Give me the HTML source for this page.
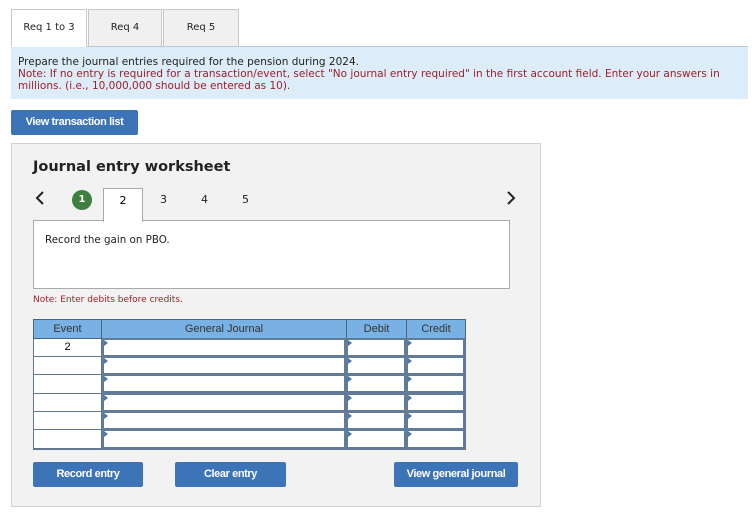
<!DOCTYPE html>
<html><head><meta charset="utf-8"><style>
*{box-sizing:border-box;margin:0;padding:0}
body{width:756px;height:515px;background:#fff;font-family:"DejaVu Sans","Liberation Sans",sans-serif;position:relative;overflow:hidden}
.a{position:absolute}
.tab{position:absolute;top:9px;height:38px;border:1px solid #c8c8c8;background:#f0f0f0;font-size:10px;text-align:center;line-height:36px;color:#222}
.btn{position:absolute;background:#3c74b7;color:#fff;font-family:"Liberation Sans",sans-serif;font-weight:bold;font-size:11px;text-align:center;border-radius:2px;letter-spacing:-0.4px}
.nav{position:absolute;top:193px;font-size:11px;color:#222}
.cell{position:absolute;background:#fff}
.in{position:absolute;background:#fff;border:2px solid #627c97}
.in:before{content:"";position:absolute;left:0;top:0;border-left:4px solid #4a77b0;border-top:3px solid transparent;border-bottom:3px solid transparent}
.th{position:absolute;top:319px;height:20px;background:#79b1e5;border:1px solid #4a6580;font-family:"Liberation Sans",sans-serif;font-size:11px;text-align:center;line-height:18px;color:#333}
</style></head><body>
<div class="tab" style="left:11px;width:76px;background:#fff;border-bottom-color:#fff;z-index:2">Req 1 to 3</div>
<div class="tab" style="left:88px;width:74px">Req 4</div>
<div class="tab" style="left:163px;width:76px">Req 5</div>
<div class="a" style="left:11px;top:46px;width:737px;height:53px;background:#dcecf9;border-top:1px solid #b8c8d8;font-size:10.5px;line-height:12px;padding:9px 0 0 7px;color:#222">
Prepare the journal entries required for the pension during 2024.<br>
<span style="color:#a0202a">Note: If no entry is required for a transaction/event, select "No journal entry required" in the first account field. Enter your answers in millions. (i.e., 10,000,000 should be entered as 10).</span></div>
<div class="btn" style="left:11px;top:110px;width:127px;height:25px;line-height:25px">View transaction list</div>
<div class="a" style="left:11px;top:143px;width:530px;height:364px;background:#f2f2f2;border:1px solid #d0d0d0"></div>
<div class="a" style="left:33px;top:159px;font-size:14.5px;font-weight:bold;color:#222">Journal entry worksheet</div>
<svg class="a" style="left:35px;top:191px" width="10" height="14"><path d="M8 1 L2 7 L8 13" fill="none" stroke="#222" stroke-width="2"/></svg>
<div class="a" style="left:72px;top:190px;width:20px;height:20px;border-radius:50%;background:#3f7f3f;color:#fff;font-size:10px;font-weight:bold;text-align:center;line-height:20px">1</div>
<div class="a" style="left:103px;top:188px;width:40px;height:34px;background:#fff;border:1px solid #aaa;border-bottom:none;z-index:2;text-align:center;font-size:11px;line-height:24px">2</div>
<div class="nav" style="left:160px">3</div>
<div class="nav" style="left:201px">4</div>
<div class="nav" style="left:242px">5</div>
<svg class="a" style="left:506px;top:191px" width="10" height="14"><path d="M2 1 L8 7 L2 13" fill="none" stroke="#222" stroke-width="2"/></svg>
<div class="a" style="left:33px;top:220px;width:477px;height:69px;background:#fff;border:1px solid #aaa;font-size:10.3px;padding:13px 0 0 11px;color:#222">Record the gain on PBO.</div>
<div class="a" style="left:33px;top:295px;font-size:9px;color:#a0202a">Note: Enter debits before credits.</div>
<div class="a" style="left:33px;top:319px;width:433px;height:131px;background:#5f7890"></div>
<div class="th" style="left:33px;width:69px">Event</div>
<div class="th" style="left:101px;width:246px">General Journal</div>
<div class="th" style="left:346px;width:61px">Debit</div>
<div class="th" style="left:406px;width:60px">Credit</div>
<div class="cell" style="left:34px;top:339px;width:67px;height:17px;font-family:'Liberation Sans',sans-serif;font-size:11px;text-align:center;line-height:17px">2</div>
<div class="cell" style="left:34px;top:357px;width:67px;height:17px"></div>
<div class="cell" style="left:34px;top:375px;width:67px;height:18px"></div>
<div class="cell" style="left:34px;top:394px;width:67px;height:17px"></div>
<div class="cell" style="left:34px;top:412px;width:67px;height:17px"></div>
<div class="cell" style="left:34px;top:430px;width:67px;height:18px"></div>
<div class="in" style="left:102px;top:338px;width:244px;height:19px"></div><div class="in" style="left:346px;top:338px;width:60px;height:19px"></div><div class="in" style="left:406px;top:338px;width:59px;height:19px"></div>
<div class="in" style="left:102px;top:356px;width:244px;height:19px"></div><div class="in" style="left:346px;top:356px;width:60px;height:19px"></div><div class="in" style="left:406px;top:356px;width:59px;height:19px"></div>
<div class="in" style="left:102px;top:374px;width:244px;height:19px"></div><div class="in" style="left:346px;top:374px;width:60px;height:19px"></div><div class="in" style="left:406px;top:374px;width:59px;height:19px"></div>
<div class="in" style="left:102px;top:393px;width:244px;height:19px"></div><div class="in" style="left:346px;top:393px;width:60px;height:19px"></div><div class="in" style="left:406px;top:393px;width:59px;height:19px"></div>
<div class="in" style="left:102px;top:411px;width:244px;height:19px"></div><div class="in" style="left:346px;top:411px;width:60px;height:19px"></div><div class="in" style="left:406px;top:411px;width:59px;height:19px"></div>
<div class="in" style="left:102px;top:429px;width:244px;height:20px"></div><div class="in" style="left:346px;top:429px;width:60px;height:20px"></div><div class="in" style="left:406px;top:429px;width:59px;height:20px"></div>
<div class="btn" style="left:33px;top:462px;width:110px;height:25px;line-height:25px">Record entry</div>
<div class="btn" style="left:175px;top:462px;width:111px;height:25px;line-height:25px">Clear entry</div>
<div class="btn" style="left:394px;top:462px;width:124px;height:25px;line-height:25px">View general journal</div>
</body></html>
